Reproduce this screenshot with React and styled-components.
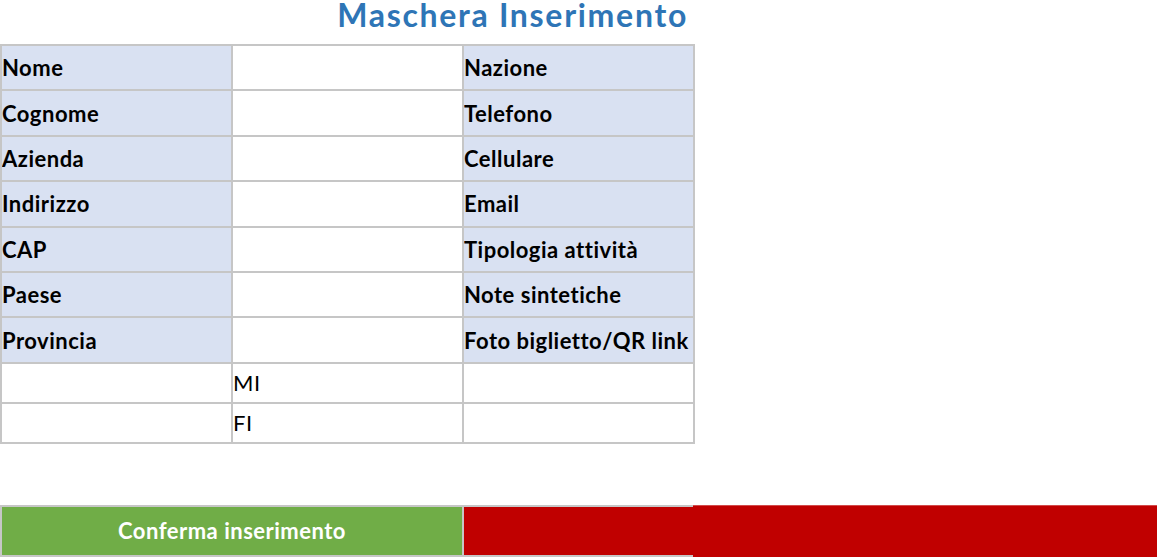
import React from "react";
import styled, { createGlobalStyle } from "styled-components";

const Global = createGlobalStyle`
  html, body { margin: 0; padding: 0; background: #ffffff; }
  body { font-family: Lato, "Liberation Sans", sans-serif; }
`;

const Page = styled.div`
  width: 1157px;
  height: 558px;
  display: flex;
  flex-direction: column;
  overflow: hidden;
`;

const TitleRow = styled.div`
  width: 695px;
  height: 44px;
  display: flex;
  align-items: flex-start;
  justify-content: flex-end;
  padding-right: 7px;
  box-sizing: border-box;
`;

const Title = styled.h1`
  margin: 0;
  font-size: 32px;
  font-weight: 700;
  letter-spacing: 1.7px;
  color: #2e75b6;
  line-height: 30px;
  white-space: nowrap;
`;

const Grid = styled.div`
  width: 695px;
  box-sizing: border-box;
  display: grid;
  grid-template-columns: repeat(3, 229px);
  grid-auto-rows: ${(p) => p.$rowH}px;
  gap: 2px;
  padding: ${(p) => (p.$noTop ? "0 2px 2px" : "2px")};
  background: #c6c6c6;
`;

const Cell = styled.div`
  background: ${(p) => (p.$label ? "#d9e1f2" : "#ffffff")};
  display: flex;
  align-items: center;
  padding-left: 0;
  font-size: 22px;
  letter-spacing: 0.5px;
  font-weight: ${(p) => (p.$label ? 700 : 400)};
  color: #000000;
  white-space: nowrap;
  overflow: hidden;
`;

const Spacer = styled.div`
  height: 61px;
`;

const ButtonRow = styled.div`
  display: flex;
  height: 52px;
`;

const ButtonGroup = styled.div`
  display: grid;
  grid-template-columns: 460px 229px;
  gap: 2px;
  padding: 2px 0 2px 2px;
  background: #c6c6c6;
`;

const Button = styled.div`
  background: ${(p) => p.$bg};
  color: #ffffff;
  font-size: 22px;
  letter-spacing: 0.5px;
  font-weight: 700;
  display: flex;
  align-items: center;
  justify-content: center;
`;

const Filler = styled.div`
  flex: 1;
  background: #c00000;
  border-top: 1px solid #d24a4a;
`;

const left = ["Nome", "Cognome", "Azienda", "Indirizzo", "CAP", "Paese", "Provincia"];
const right = [
  "Nazione",
  "Telefono",
  "Cellulare",
  "Email",
  "Tipologia attività",
  "Note sintetiche",
  "Foto biglietto/QR link",
];

export default function App() {
  return (
    <>
      <Global />
      <Page>
        <TitleRow>
          <Title>Maschera Inserimento</Title>
        </TitleRow>
        <Grid $rowH={43.4}>
          {left.map((l, i) => (
            <React.Fragment key={l}>
              <Cell $label>{l}</Cell>
              <Cell />
              <Cell $label>{right[i]}</Cell>
            </React.Fragment>
          ))}
        </Grid>
        <Grid $rowH={38} $noTop>
          <Cell />
          <Cell>MI</Cell>
          <Cell />
          <Cell />
          <Cell>FI</Cell>
          <Cell />
        </Grid>
        <Spacer />
        <ButtonRow>
          <ButtonGroup>
            <Button $bg="#70ad47">Conferma inserimento</Button>
            <Button $bg="#c00000" />
          </ButtonGroup>
          <Filler />
        </ButtonRow>
      </Page>
    </>
  );
}
